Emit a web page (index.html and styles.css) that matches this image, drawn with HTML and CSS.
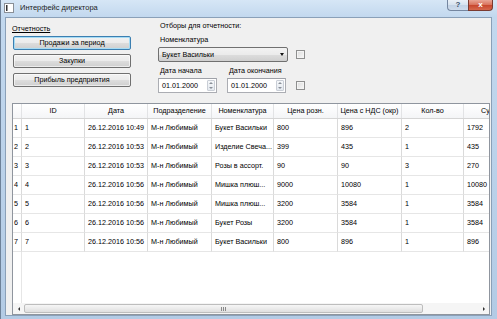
FILE: index.html
```html
<!DOCTYPE html>
<html lang="ru">
<head>
  <meta charset="UTF-8" />
  <title>Интерфейс директора</title>
  <link rel="stylesheet" href="styles.css">
</head>
<body>
  <div class="window">
    <!-- Заголовок окна -->
    <div class="titlebar">
      <svg class="app-icon" viewBox="0 0 10 10">
        <rect x="0.5" y="0.5" width="9" height="9" fill="#fff" stroke="#8a8f96"/>
        <rect x="2" y="2" width="1.5" height="6" fill="#333"/>
      </svg>
      <span class="title">Интерфейс директора</span>
      <div class="caption-btns">
        <span class="cap help">?</span>
        <span class="cap close">x</span>
      </div>
    </div>

    <div class="client">
      <div class="top">
        <!-- Отчеты -->
        <div class="reports">
          <div class="group-label">Отчетность</div>
          <div class="btn default">Продажи за период</div>
          <div class="btn">Закупки</div>
          <div class="btn">Прибыль предприятия</div>
        </div>

        <!-- Отборы -->
        <div class="filters">
          <div class="caption">Отборы для отчетности:</div>
          <div class="field-label">Номенклатура</div>
          <div class="line">
            <div class="combo"><span>Букет Васильки</span><span class="arrow"></span></div>
            <span class="check"></span>
          </div>
          <div class="line dates">
            <div class="field">
              <div class="field-label">Дата начала</div>
              <div class="date"><span>01.01.2000</span><span class="spin"><i class="up"></i><i class="down"></i></span></div>
            </div>
            <div class="field">
              <div class="field-label">Дата окончания</div>
              <div class="date"><span>01.01.2000</span><span class="spin"><i class="up"></i><i class="down"></i></span></div>
            </div>
            <span class="check"></span>
          </div>
        </div>
      </div>

      <!-- Таблица -->
      <div class="grid">
        <div class="hdr">
          <div></div>
          <div>ID</div>
          <div>Дата</div>
          <div>Подразделение</div>
          <div>Номенклатура</div>
          <div>Цена розн.</div>
          <div>Цена с НДС (окр)</div>
          <div>Кол-во</div>
          <div class="last">Сумма</div>
        </div>
        <div class="row"><div class="vh">1</div><div>1</div><div>26.12.2016 10:49</div><div>М-н Любимый</div><div>Букет Васильки</div><div>800</div><div>896</div><div>2</div><div>1792</div></div>
        <div class="row"><div class="vh">2</div><div>2</div><div>26.12.2016 10:53</div><div>М-н Любимый</div><div>Изделие Свеча...</div><div>399</div><div>435</div><div>1</div><div>435</div></div>
        <div class="row"><div class="vh">3</div><div>3</div><div>26.12.2016 10:53</div><div>М-н Любимый</div><div>Розы в ассорт.</div><div>90</div><div>90</div><div>3</div><div>270</div></div>
        <div class="row"><div class="vh">4</div><div>4</div><div>26.12.2016 10:56</div><div>М-н Любимый</div><div>Мишка плюш...</div><div>9000</div><div>10080</div><div>1</div><div>10080</div></div>
        <div class="row"><div class="vh">5</div><div>5</div><div>26.12.2016 10:56</div><div>М-н Любимый</div><div>Мишка плюш...</div><div>3200</div><div>3584</div><div>1</div><div>3584</div></div>
        <div class="row"><div class="vh">6</div><div>6</div><div>26.12.2016 10:56</div><div>М-н Любимый</div><div>Букет Розы</div><div>3200</div><div>3584</div><div>1</div><div>3584</div></div>
        <div class="row"><div class="vh">7</div><div>7</div><div>26.12.2016 10:56</div><div>М-н Любимый</div><div>Букет Васильки</div><div>800</div><div>896</div><div>1</div><div>896</div></div>
        <div class="filler"><div class="vh-fill"></div></div>
        <div class="hscroll">
          <span class="sb-btn left"></span>
          <div class="sb-track"><span class="thumb"></span></div>
          <span class="sb-btn right"></span>
        </div>
      </div>
    </div>
  </div>
</body>
</html>
```

FILE: styles.css
```css
* {
  margin: 0;
  padding: 0;
  box-sizing: border-box;
}

body {
  font-family: "Liberation Sans", "DejaVu Sans", sans-serif;
  font-size: 7.2px;
  color: #000;
  background: #fff;
}

.window {
  width: 497px;
  height: 319px;
  display: flex;
  flex-direction: column;
  padding: 0 5px 3px 4px;
  background: linear-gradient(180deg, #d6e6f6 0, #c2d8ee 17px, #b3cbe5 100%);
  border-left: 1px solid #6e8299;
}

/* заголовок */
.titlebar {
  height: 17px;
  display: flex;
  align-items: flex-start;
}

.app-icon {
  width: 10px;
  height: 10px;
  margin: 3px 0 0 -1px;
}

.title {
  margin: 3px 0 0 6px;
  font-size: 7.5px;
  line-height: 10px;
  color: #1c1c1c;
}

.caption-btns {
  margin-left: auto;
  margin-right: -1px;
  display: flex;
}

.cap {
  height: 11px;
  text-align: center;
  font-weight: bold;
  font-size: 8px;
  line-height: 10px;
}

.cap.help {
  width: 21px;
  color: #3b4f6b;
  background: linear-gradient(180deg, #eaf0f7 0, #d6e2ef 50%, #c2d2e5 51%, #cfdcec 100%);
  border: 1px solid #7486a0;
  border-top: 0;
  border-right: 0;
  border-radius: 0 0 0 4px;
}

.cap.close {
  width: 25px;
  color: #fff;
  background: linear-gradient(180deg, #e9a595 0, #d8705a 50%, #c7452c 51%, #d6684d 100%);
  border: 1px solid #7a3a30;
  border-top: 0;
  border-radius: 0 0 4px 0;
}

/* клиентская область */
.client {
  flex: 1;
  display: flex;
  flex-direction: column;
  background: #f0f0f0;
  border: 1px solid #8aa0b8;
}

.top {
  height: 85px;
  display: flex;
}

.reports {
  width: 119px;
  margin-left: 6px;
  padding-top: 6px;
}

.group-label {
  line-height: 10px;
  text-decoration: underline;
}

.btn {
  width: 118px;
  height: 14px;
  margin: 4px 0 0 1px;
  line-height: 12px;
  text-align: center;
  border: 1px solid #707070;
  border-radius: 2px;
  background: linear-gradient(180deg, #f2f2f2 0, #ebebeb 50%, #dddddd 51%, #cfcfcf 100%);
  box-shadow: inset 0 0 0 1px rgba(255, 255, 255, 0.6);
}

.btn.default {
  margin-top: 2px;
  border-color: #3c7fb1;
  box-shadow: inset 0 0 0 1px #a6dcf5;
}

.btn + .btn + .btn {
  margin-top: 5px;
}

.filters {
  margin-left: 27px;
  padding-top: 3px;
}

.caption,
.field-label {
  line-height: 10px;
  padding-left: 2px;
}

.field-label {
  margin-top: 4px;
}

.line {
  display: flex;
  align-items: center;
}

.combo {
  width: 130px;
  height: 15px;
  margin-top: 2px;
  display: flex;
  align-items: center;
  justify-content: space-between;
  padding: 0 3px 0 3px;
  border: 1px solid #707070;
  border-radius: 2px;
  background: linear-gradient(180deg, #f2f2f2 0, #ebebeb 50%, #dddddd 51%, #cfcfcf 100%);
}

.arrow {
  width: 0;
  height: 0;
  border-left: 2.5px solid transparent;
  border-right: 2.5px solid transparent;
  border-top: 3px solid #111;
}

.check {
  width: 9px;
  height: 9px;
  margin-left: 8px;
  margin-top: 1px;
  border: 1px solid #8e8f8f;
  background: linear-gradient(135deg, #dcdcdc 0, #f8f8f8 100%);
  box-shadow: inset 0 0 0 1px #f4f4f4;
}

.dates {
  align-items: flex-end;
  gap: 10px;
}

.dates .check {
  margin: 0 0 3px 0;
}

.field {
  display: flex;
  flex-direction: column;
}

.date {
  width: 59px;
  height: 15px;
  margin-top: 2px;
  display: flex;
  align-items: center;
  justify-content: space-between;
  padding: 0 1px 0 3px;
  border: 1px solid #abadb3;
  border-top-color: #9ea1a8;
  background: #fff;
}

.spin {
  width: 8px;
  height: 11px;
  display: flex;
  flex-direction: column;
  border: 1px solid #c9ced6;
  border-radius: 1px;
  background: linear-gradient(180deg, #f6f8fa, #e4e9ef);
}

.spin i {
  flex: 1;
  display: flex;
  align-items: center;
  justify-content: center;
}

.spin i::after {
  content: "";
  border-left: 2px solid transparent;
  border-right: 2px solid transparent;
}

.spin .up::after {
  border-bottom: 2px solid #8a9099;
}

.spin .down::after {
  border-top: 2px solid #8a9099;
}

/* таблица */
.grid {
  flex: 1;
  width: 478px;
  margin-left: 6px;
  display: flex;
  flex-direction: column;
  border: 1px solid #8f959e;
  background: #fff;
  overflow: hidden;
}

.hdr,
.row {
  display: grid;
  grid-template-columns: 9px 63px 63px 64px 62px 64px 64px 62px 63px;
  flex-shrink: 0;
}

.hdr > div,
.row > div {
  white-space: nowrap;
  overflow: hidden;
}

.hdr {
  height: 15px;
  line-height: 14px;
  text-align: center;
  background: linear-gradient(180deg, #ffffff, #f4f5f7);
  border-bottom: 1px solid #d5d5d5;
}

.hdr > div {
  border-right: 1px solid #e2e3e5;
}

.hdr > .last {
  text-align: left;
  padding-left: 17px;
}

.row {
  height: 19px;
  line-height: 18px;
}

.row > div {
  padding-left: 3px;
  border-right: 1px solid #dadada;
  border-bottom: 1px solid #e6e6e6;
}

.row > .vh {
  padding-left: 1px;
}

.filler {
  flex: 1;
}

.vh-fill {
  width: 9px;
  height: 100%;
  border-right: 1px solid #e6e6e6;
}

.hscroll {
  height: 11px;
  display: flex;
  flex-shrink: 0;
  background: #f5f5f5;
}

.sb-btn {
  width: 11px;
  display: flex;
  align-items: center;
  justify-content: center;
}

.sb-btn::after {
  content: "";
  border-top: 2px solid transparent;
  border-bottom: 2px solid transparent;
}

.sb-btn.left::after {
  border-right: 2px solid #333;
}

.sb-btn.right::after {
  border-left: 2px solid #333;
}

.sb-track {
  flex: 1;
  display: flex;
  padding: 1px 0;
}

.thumb {
  width: 399px;
  display: flex;
  align-items: center;
  justify-content: center;
  border: 1px solid #bdbdbd;
  border-radius: 2px;
  background: linear-gradient(180deg, #f6f6f6 0, #ebebeb 50%, #dedede 100%);
}

.thumb::after {
  content: "";
  width: 5px;
  height: 4px;
  background: repeating-linear-gradient(90deg, #8a8a8a 0 1px, transparent 1px 2px);
}
```
